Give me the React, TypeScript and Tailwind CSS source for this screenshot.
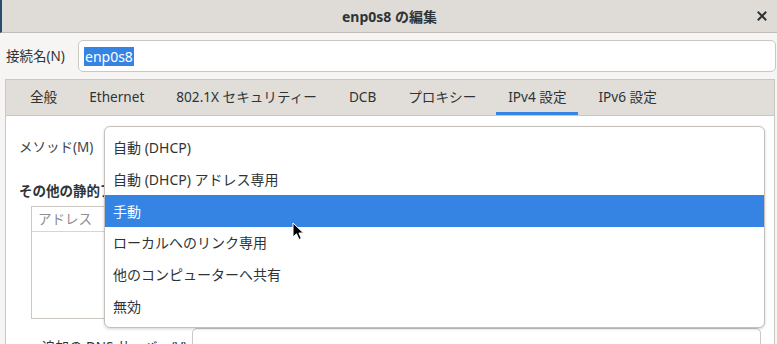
import React from 'react';

const tabs = ['全般', 'Ethernet', '802.1X セキュリティー', 'DCB', 'プロキシー', 'IPv4 設定', 'IPv6 設定'];
const methods = ['自動 (DHCP)', '自動 (DHCP) アドレス専用', '手動', 'ローカルへのリンク専用', '他のコンピューターへ共有', '無効'];

const App = () => {
    return (
        <div className='relative w-[777px] h-[344px] overflow-hidden bg-[#f6f5f4] text-[#2e3436]' style={{ fontFamily: '"Noto Sans", "Noto Sans CJK JP", sans-serif' }}>
            {/* header bar */}
            <div className='relative h-[33px] bg-[#dfdcd8] border-b border-[#c0bdb8] border-l-2 border-l-[#2a4a6e] flex items-center justify-center'>
                <span className='text-[14px] font-bold'>enp0s8 の編集</span>
                <svg className='absolute right-[10px] top-[11px]' width='10' height='10' viewBox='0 0 10 10'>
                    <path d='M1.5 1.5 L8.5 8.5 M8.5 1.5 L1.5 8.5' stroke='#2e3436' strokeWidth='2' strokeLinecap='square' />
                </svg>
            </div>

            {/* connection name */}
            <div className='flex items-center mt-[7px] h-[32px]'>
                <span className='w-[78px] pl-[6px] text-[13.5px]'>接続名(N)</span>
                <div className='flex-1 h-[32px] mr-[1px] bg-white border border-[#cdc7c2] rounded-[5px] flex items-center px-[5px]'>
                    <span className='bg-[#3584e4] text-white text-[14px] leading-[19px] px-[1px]'>enp0s8</span>
                </div>
            </div>

            {/* notebook */}
            <div className='ml-[5px] mr-[2px] mt-[7px] border border-[#cdc7c2] bg-white h-[300px]'>
                <div className='h-[36px] bg-[#e1ded9] border-b border-[#cdc7c2] flex pl-[8px]'>
                    {tabs.map((t) => (
                        <div key={t} className='relative h-full flex items-center px-[12px] mx-[4px] text-[13.6px]'>
                            {t}
                            {t === 'IPv4 設定' && <div className='absolute left-0 right-0 bottom-0 h-[3px] bg-[#3584e4]' />}
                        </div>
                    ))}
                </div>
                <div className='px-[13px] pt-[20px]'>
                    <div className='text-[13.5px] text-[#3d4345] h-[22px] flex items-center'>メソッド(M)</div>
                    <div className='mt-[24px] text-[13.5px] font-bold leading-[18px]'>その他の静的アドレス(A)</div>
                    <div className='ml-[12px] mt-[6px] w-[500px] h-[113px] border border-[#cdc7c2]'>
                        <div className='h-[25px] border-b border-[#d8d4d0] flex items-center px-[6px] text-[13.5px] text-[#8b8e8f]'>アドレス</div>
                    </div>
                    <div className='flex mt-[9px] ml-[23px]'>
                        <span className='text-[13.5px] pt-[9px] w-[150px]'>追加の DNS サーバー(V)</span>
                        <div className='flex-1 h-[32px] border border-[#cdc7c2] rounded-[5px] bg-white' />
                    </div>
                </div>
            </div>

            {/* dropdown popup */}
            <div className='absolute left-[104px] top-[126px] w-[661px] h-[202px] bg-white border border-[#c4c0bb] rounded-[6px] shadow-[0_1px_3px_rgba(0,0,0,0.18)] py-[5px]'>
                {methods.map((m) => (
                    <div key={m} className={`h-[31.7px] flex items-center px-[8px] text-[14px] ${m === '手動' ? 'bg-[#3584e4] text-white' : 'text-[#2e3436]'}`}>
                        {m}
                    </div>
                ))}
            </div>

            {/* mouse pointer */}
            <svg className='absolute left-[292px] top-[222px]' width='14' height='20' viewBox='0 0 14 20'>
                <path d='M1 1 L1 15 L4.5 11.8 L7 17.5 L9.3 16.5 L6.9 11 L11.5 11 Z' fill='#000' stroke='#fff' strokeWidth='1' strokeLinejoin='round' />
            </svg>
        </div>
    );
};

export default App;
